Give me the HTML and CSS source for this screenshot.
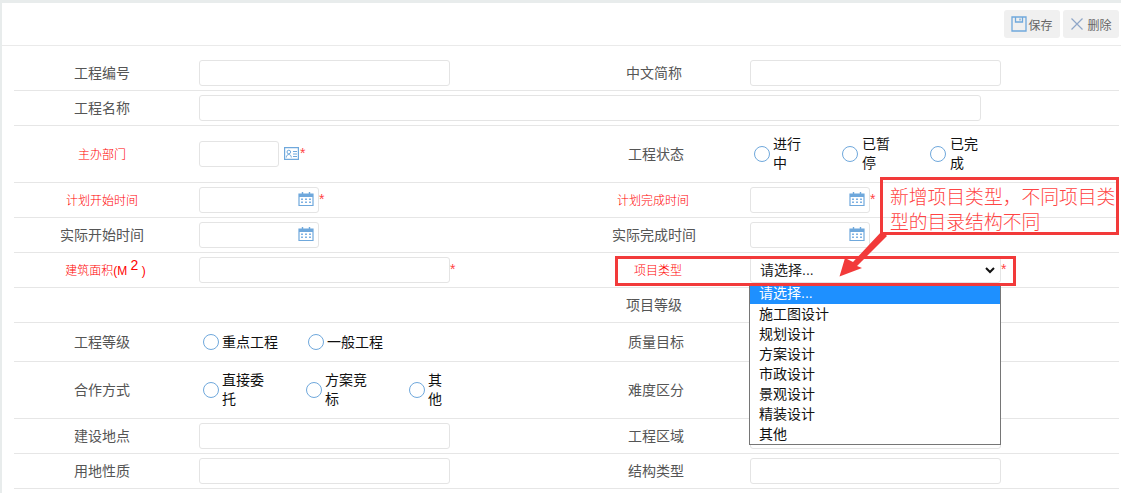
FILE: index.html
```html
<!DOCTYPE html>
<html lang="zh">
<head>
<meta charset="utf-8">
<title>工程信息</title>
<link rel="stylesheet" href="styles.css">
</head>
<body>
<svg class="defs" width="0" height="0">
  <defs>
    <symbol id="cal" viewBox="0 0 16 16">
      <path d="M1 3h14v11.500H1z" fill="#fff" stroke="#6fa8dc" stroke-width="1.200"/>
      <path d="M1 3h14v3H1z" fill="#6fa8dc"/>
      <path d="M4.500 1v3M11.500 1v3" stroke="#6fa8dc" stroke-width="1.400"/>
      <path d="M3 7.500h2v1.500H3zM7 7.500h2v1.500H7zM11 7.500h2v1.500h-2zM3 10.500h2V12H3zM7 10.500h2V12H7zM11 10.500h2V12h-2z" fill="#7fb2e3"/>
    </symbol>
  </defs>
</svg>
<main class="page">
  <div class="toolbar">
    <button class="tool" type="button">
      <svg width="16" height="16" viewBox="0 0 16 16"><path d="M1 1h14v14H1zM4.500 1v5h7V1M9 2.500v2" fill="none" stroke="#6fa8dc" stroke-width="1.300"/></svg>保存
    </button>
    <button class="tool" type="button">
      <svg class="x" width="14" height="14" viewBox="0 0 14 14"><path d="M1.500 1.500l11 11M12.500 1.500l-11 11" fill="none" stroke="#8fa6c8" stroke-width="1.200"/></svg>删除
    </button>
  </div>

  <form class="form">
    <div class="row r-first">
      <label class="lab">工程编号</label><div class="f"><input class="in w251"></div>
      <label class="lab">中文简称</label><div class="f2"><input class="in w251"></div>
    </div>
    <div class="row">
      <label class="lab">工程名称</label><div class="span"><input class="in w782"></div>
    </div>
    <div class="row r-tall">
      <label class="lab req">主办部门</label>
      <div class="f"><input class="in w80">
        <svg class="card" width="15" height="13" viewBox="0 0 15 13"><path d="M.600.600h13.800v11.800H.600z" fill="none" stroke="#6fa8dc" stroke-width="1.200"/><circle cx="4.800" cy="5" r="1.800" fill="none" stroke="#6fa8dc"/><path d="M2.300 10.500c0-4 5-4 5 0M9 4.500h4M9 7h4M9 9.500h4" fill="none" stroke="#6fa8dc"/></svg><span class="star">*</span>
      </div>
      <label class="lab nudge">工程状态</label>
      <div class="f2 radios status">
        <label class="rad"><input type="radio" name="s"><span>进行中</span></label>
        <label class="rad"><input type="radio" name="s"><span>已暂停</span></label>
        <label class="rad"><input type="radio" name="s"><span>已完成</span></label>
      </div>
    </div>
    <div class="row">
      <label class="lab req">计划开始时间</label>
      <div class="f"><span class="date"><input class="in w120"><svg class="ico"><use href="#cal"/></svg></span><span class="star">*</span></div>
      <label class="lab req back">计划完成时间</label>
      <div class="f2"><span class="date"><input class="in w120"><svg class="ico"><use href="#cal"/></svg></span><span class="star">*</span></div>
    </div>
    <div class="row">
      <label class="lab">实际开始时间</label>
      <div class="f"><span class="date"><input class="in w120"><svg class="ico"><use href="#cal"/></svg></span></div>
      <label class="lab">实际完成时间</label>
      <div class="f2"><span class="date"><input class="in w120"><svg class="ico"><use href="#cal"/></svg></span></div>
    </div>
    <div class="row">
      <label class="lab req area">建筑面积(M <sup>2</sup> )</label>
      <div class="f"><input class="in w251"><span class="star">*</span></div>
      <label class="lab req type">项目类型</label>
      <div class="f2"><div class="sel">请选择...<svg width="10" height="7" viewBox="0 0 10 7"><path d="M1 1l4 4 4-4" fill="none" stroke="#111" stroke-width="2"/></svg></div><span class="star">*</span></div>
    </div>
    <div class="row">
      <div class="lab"></div><div class="f"></div>
      <label class="lab">项目等级</label><div class="f2"></div>
    </div>
    <div class="row r-mid">
      <label class="lab">工程等级</label>
      <div class="f radios level">
        <label class="rad"><input type="radio" name="l"><span>重点工程</span></label>
        <label class="rad"><input type="radio" name="l"><span>一般工程</span></label>
      </div>
      <label class="lab nudge">质量目标</label><div class="f2"></div>
    </div>
    <div class="row r-tall">
      <label class="lab">合作方式</label>
      <div class="f radios coop">
        <label class="rad"><input type="radio" name="c"><span>直接委托</span></label>
        <label class="rad"><input type="radio" name="c"><span>方案竞标</span></label>
        <label class="rad"><input type="radio" name="c"><span>其他</span></label>
      </div>
      <label class="lab nudge">难度区分</label><div class="f2"></div>
    </div>
    <div class="row">
      <label class="lab">建设地点</label><div class="f"><input class="in w251"></div>
      <label class="lab nudge">工程区域</label><div class="f2"><input class="in w251"></div>
    </div>
    <div class="row">
      <label class="lab">用地性质</label><div class="f"><input class="in w251"></div>
      <label class="lab nudge">结构类型</label><div class="f2"><input class="in w251"></div>
    </div>
  </form>

  <ul class="drop">
    <li class="on">请选择...</li>
    <li>施工图设计</li>
    <li>规划设计</li>
    <li>方案设计</li>
    <li>市政设计</li>
    <li>景观设计</li>
    <li>精装设计</li>
    <li>其他</li>
  </ul>
  <div class="note">新增项目类型，不同项目类型的目录结构不同</div>
  <div class="mark"></div>
  <svg class="arrow" width="50" height="50" viewBox="0 0 50 50"><path d="M43 1L48 6 18 36 23 38 .5 46.500 6 28 14 32z" fill="#f23a3a"/></svg>
</main>
</body>
</html>
```
FILE: styles.css
```css
* { box-sizing: border-box; }
html, body { margin: 0; height: 100%; overflow: hidden; }
body {
  background: #e8ecec;
  padding: 3px 0 0 2px;
  font: 14px/19px "Liberation Sans", "Noto Sans CJK SC", sans-serif;
  color: #555;
}
.defs { position: absolute; }
.page { position: relative; background: #fff; height: 490px; }
.toolbar {
  display: flex; justify-content: flex-end; gap: 3px;
  height: 43px; padding: 7px 2px 0 0;
  border-bottom: 1px solid #eaeaea;
}
.tool {
  display: flex; align-items: center; justify-content: center; gap: 1px;
  width: 56px; height: 28px; padding: 0;
  border: 0; border-radius: 3px; background: #f0f0f0;
  font: 12px "Liberation Sans", "Noto Sans CJK SC", sans-serif; color: #666;
}
.tool .x { margin-right: 2px; }
.form { margin: 0 2px 0 12px; }
.row {
  display: grid; grid-template-columns: 176px 375px 178px 374px;
  align-items: center;
  height: 35px;
  border-bottom: 1px solid #e6e6e6;
}
.r-first { height: 45px; padding-top: 10px; }
.r-tall { height: 57px; }
.r-mid { height: 39px; }
.lab { text-align: center; }
.lab.nudge { padding-left: 4px; }
.lab.req { color: #f00; font-size: 12px; font-weight: 300; padding-top: 2px; }
.lab.back { padding-right: 2px; }
.lab.area { padding-left: 7px; }
.lab.type { padding-left: 8px; }
.lab sup { font-size: 14px; line-height: 0; }
.f { padding-left: 9px; display: flex; align-items: center; }
.f2 { padding-left: 7px; display: flex; align-items: center; }
.span { grid-column: 2 / 5; padding-left: 9px; }
.in {
  display: block; height: 26px; margin: 0; padding: 0 8px;
  border: 1px solid #e4e4e4; border-radius: 3px; background: #fff;
}
.w80 { width: 80px; }
.w120 { width: 120px; }
.w251 { width: 251px; }
.w782 { width: 782px; }
.card { flex: none; margin: 0 1px 2px 5px; }
.star { color: #f44; font-size: 14px; margin-bottom: 2px; }
.date { display: block; position: relative; }
.ico { position: absolute; right: 5px; top: 4px; width: 16px; height: 16px; }
.sel {
  display: flex; justify-content: space-between; align-items: center;
  width: 251px; height: 26px; padding: 0 5px 0 9px;
  border: 1px solid #e4e4e4; border-radius: 3px; background: #fff; color: #222;
}
.radios { color: #111; }
.rad { display: flex; align-items: center; }
.rad input {
  appearance: none; flex: none;
  width: 16px; height: 16px; margin: 0 3px 0 0;
  border: 1px solid #6fa8dc; border-radius: 50%; background: #fff;
}
.status { padding-left: 11px; }
.status .rad { width: 88px; }
.status .rad span { width: 30px; }
.status .rad + .rad input { margin-right: 4px; }
.level { padding-left: 13px; }
.level .rad { width: 105px; }
.coop { padding-left: 13px; }
.coop .rad { width: 103px; }
.coop .rad span { width: 44px; }
.coop .rad:last-child span { width: 16px; }

.drop {
  position: absolute; left: 747px; top: 281px;
  width: 252px; height: 161px; margin: 0; padding: 0;
  list-style: none; background: #fff;
  border: 1px solid #767676; color: #111;
}
.drop li { height: 20px; padding-left: 9px; line-height: 20px; }
.drop .on { height: 19px; line-height: 17px; background: #1e90ff; color: #fff; }
.note {
  position: absolute; left: 878px; top: 174px;
  width: 239px; height: 58px; padding: 5px 0 0 7px;
  border: 3px solid #f23a3a;
  font-size: 18.800px; font-weight: 300; line-height: 25px; color: #f44;
  overflow: hidden;
}
.mark {
  position: absolute; left: 613px; top: 253px;
  width: 401px; height: 30px;
  border: 3px solid #f23a3a;
}
.arrow { position: absolute; left: 837px; top: 227px; }
```
